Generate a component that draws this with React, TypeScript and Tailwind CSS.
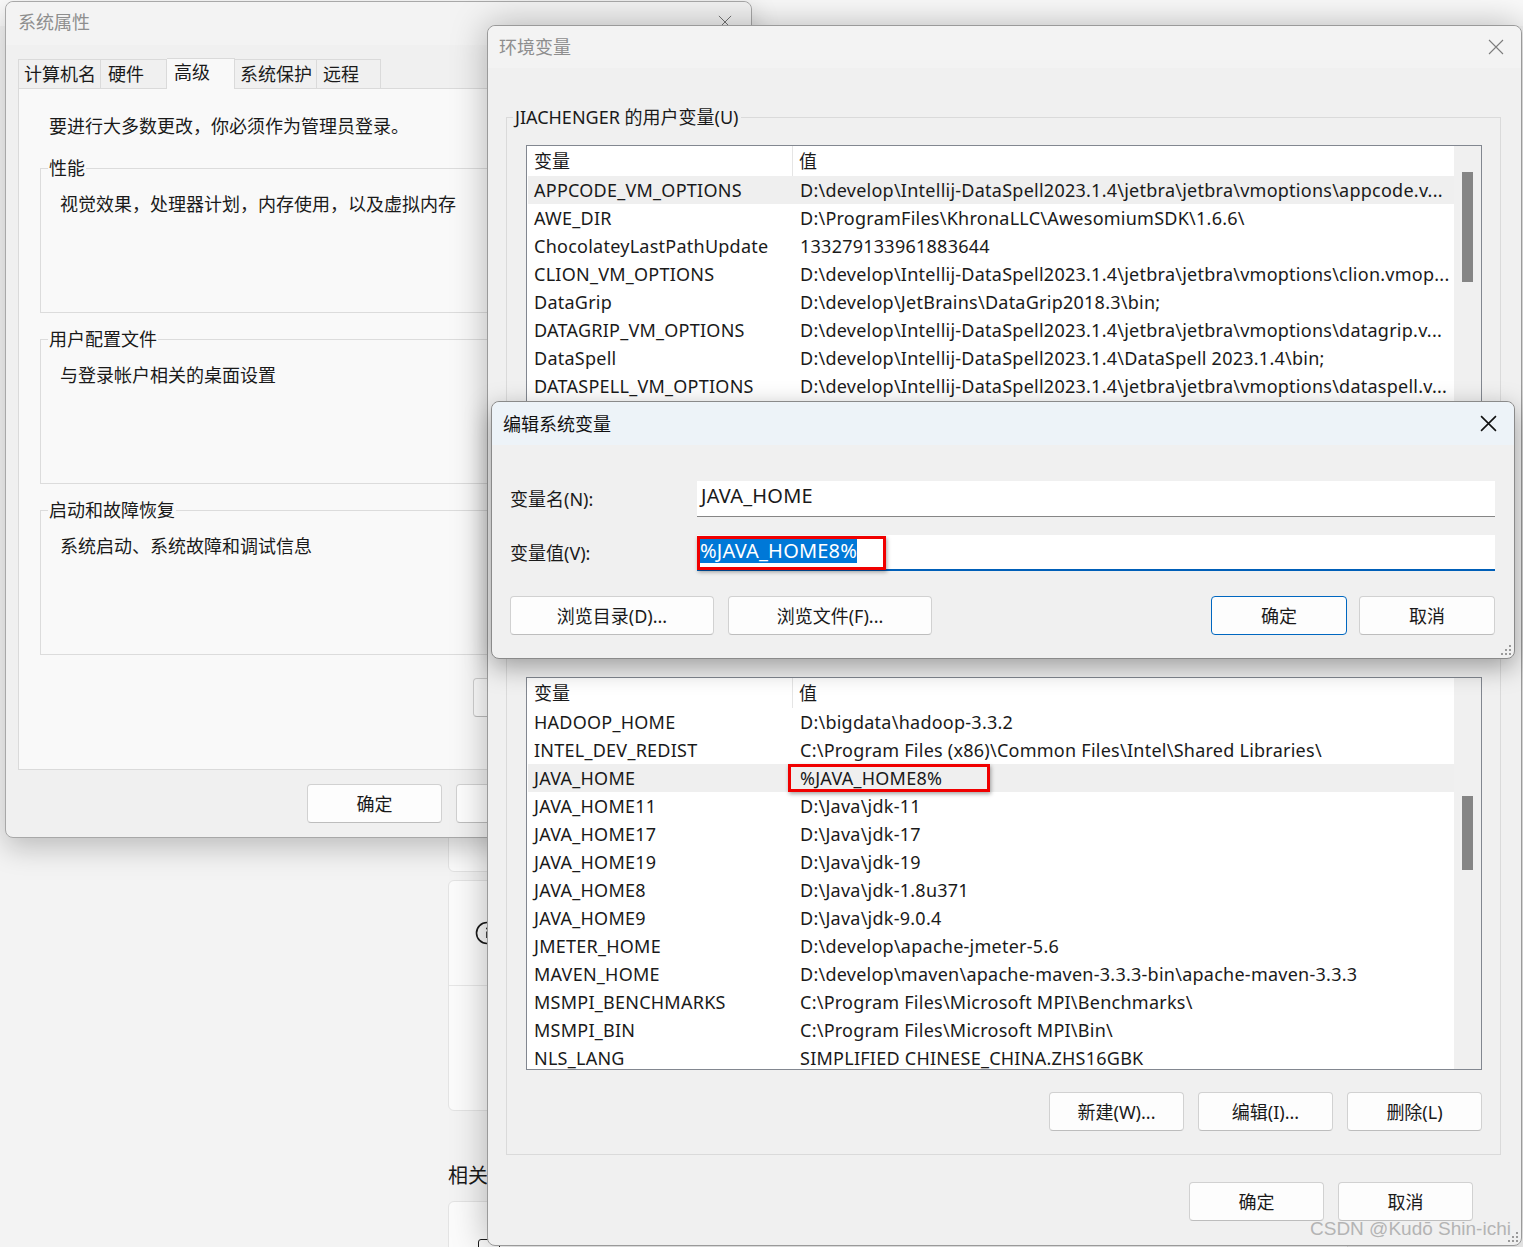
import React from "react";

const userVars: [string, string][] = [
  ["APPCODE_VM_OPTIONS", "D:\\develop\\Intellij-DataSpell2023.1.4\\jetbra\\jetbra\\vmoptions\\appcode.v..."],
  ["AWE_DIR", "D:\\ProgramFiles\\KhronaLLC\\AwesomiumSDK\\1.6.6\\"],
  ["ChocolateyLastPathUpdate", "133279133961883644"],
  ["CLION_VM_OPTIONS", "D:\\develop\\Intellij-DataSpell2023.1.4\\jetbra\\jetbra\\vmoptions\\clion.vmop..."],
  ["DataGrip", "D:\\develop\\JetBrains\\DataGrip2018.3\\bin;"],
  ["DATAGRIP_VM_OPTIONS", "D:\\develop\\Intellij-DataSpell2023.1.4\\jetbra\\jetbra\\vmoptions\\datagrip.v..."],
  ["DataSpell", "D:\\develop\\Intellij-DataSpell2023.1.4\\DataSpell 2023.1.4\\bin;"],
  ["DATASPELL_VM_OPTIONS", "D:\\develop\\Intellij-DataSpell2023.1.4\\jetbra\\jetbra\\vmoptions\\dataspell.v..."],
  ["GATEWAY_VM_OPTIONS", "D:\\develop\\Intellij-DataSpell2023.1.4\\jetbra\\jetbra\\vmoptions\\gateway.v..."],
  ["GOLAND_VM_OPTIONS", "D:\\develop\\Intellij-DataSpell2023.1.4\\jetbra\\jetbra\\vmoptions\\goland.v..."],
  ["IDEA_VM_OPTIONS", "D:\\develop\\Intellij-DataSpell2023.1.4\\jetbra\\jetbra\\vmoptions\\idea.vmo..."],
  ["JETBRAINSCLIENT_VM_OPTIONS", "D:\\develop\\Intellij-DataSpell2023.1.4\\jetbra\\jetbra\\vmoptions\\jetbr..."],
  ["OneDrive", "C:\\Users\\JIACHENGER\\OneDrive"],
  ["Path", "C:\\Users\\JIACHENGER\\AppData\\Local\\Microsoft\\WindowsApps;"],
];

const sysVars: [string, string][] = [
  ["HADOOP_HOME", "D:\\bigdata\\hadoop-3.3.2"],
  ["INTEL_DEV_REDIST", "C:\\Program Files (x86)\\Common Files\\Intel\\Shared Libraries\\"],
  ["JAVA_HOME", "%JAVA_HOME8%"],
  ["JAVA_HOME11", "D:\\Java\\jdk-11"],
  ["JAVA_HOME17", "D:\\Java\\jdk-17"],
  ["JAVA_HOME19", "D:\\Java\\jdk-19"],
  ["JAVA_HOME8", "D:\\Java\\jdk-1.8u371"],
  ["JAVA_HOME9", "D:\\Java\\jdk-9.0.4"],
  ["JMETER_HOME", "D:\\develop\\apache-jmeter-5.6"],
  ["MAVEN_HOME", "D:\\develop\\maven\\apache-maven-3.3.3-bin\\apache-maven-3.3.3"],
  ["MSMPI_BENCHMARKS", "C:\\Program Files\\Microsoft MPI\\Benchmarks\\"],
  ["MSMPI_BIN", "C:\\Program Files\\Microsoft MPI\\Bin\\"],
  ["NLS_LANG", "SIMPLIFIED CHINESE_CHINA.ZHS16GBK"],
  ["NUMBER_OF_PROCESSORS", "16"],
];

function CloseX({ size, color, stroke }: { size: number; color: string; stroke: number }) {
  return (
    <svg width={size} height={size} viewBox="0 0 16 16">
      <path d="M1 1L15 15M15 1L1 15" stroke={color} strokeWidth={stroke} fill="none" />
    </svg>
  );
}

function Grip() {
  // resize grip dots
  const dots = [
    [9, 1], [9, 5], [5, 5], [9, 9], [5, 9], [1, 9],
  ];
  return (
    <svg width="12" height="12" viewBox="0 0 12 12">
      {dots.map(([x, y]) => (
        <rect key={`${x}-${y}`} x={x} y={y} width="2" height="2" fill="#9a9a9a" />
      ))}
    </svg>
  );
}

function WinButton({ label, primary, width }: { label: string; primary?: boolean; width: string }) {
  return (
    <div
      className={`flex h-[39px] shrink-0 items-center justify-center rounded-[4px] border bg-[#fdfdfd] text-[18px] ${width} ${
        primary ? "border-[#0067c0]" : "border-[#d1d1d1] border-b-[#bdbdbd]"
      }`}
    >
      {label}
    </div>
  );
}

function VarList({
  rows,
  selected,
  thumbTop,
  thumbHeight,
  mark,
}: {
  rows: [string, string][];
  selected: number;
  thumbTop: string;
  thumbHeight: string;
  mark?: boolean;
}) {
  return (
    <div className="flex h-[393px] overflow-hidden border border-[#828790] bg-white">
      <div className="min-w-0 flex-1 overflow-hidden">
        <div className="flex h-[30px] items-center">
          <div className="flex h-full w-[266px] items-center border-r border-[#e5e5e5] pl-[7px]">变量</div>
          <div className="pl-[6px]">值</div>
        </div>
        {rows.map(([k, v], i) => (
          <div
            key={k}
            className={`relative ml-px flex h-[28px] items-center whitespace-nowrap tracking-[0.25px] ${
              i === selected ? "bg-[#efefef]" : ""
            }`}
          >
            <div className="w-[265px] shrink-0 pl-[6px]">{k}</div>
            <div className="pl-[7px]">{v}</div>
            {mark && i === selected && (
              <div className="absolute left-[260px] top-0 h-[28px] w-[202px] border-[3px] border-[#f00000] shadow-[1px_2px_4px_rgba(0,0,0,0.35)]" />
            )}
          </div>
        ))}
      </div>
      <div className="w-[27px] shrink-0 bg-[#f0f0f0] pl-[8px]">
        <div className={`w-[11px] bg-[#858585] ${thumbTop} ${thumbHeight}`} />
      </div>
    </div>
  );
}

function VarGroup({
  title,
  rows,
  selected,
  thumbTop,
  thumbHeight,
  mark,
  className,
}: {
  title: string;
  rows: [string, string][];
  selected: number;
  thumbTop: string;
  thumbHeight: string;
  mark?: boolean;
  className?: string;
}) {
  return (
    <fieldset className={`border border-[#dadada] ${className ?? ""}`}>
      <legend className="ml-[6px] px-[2px] leading-[22px]">{title}</legend>
      <div className="pb-[23px] pl-[19px] pr-[18px]">
        <div className="mt-[17px]">
          <VarList rows={rows} selected={selected} thumbTop={thumbTop} thumbHeight={thumbHeight} mark={mark} />
        </div>
        <div className="mt-[22px] flex justify-end gap-[14px]">
          <WinButton label="新建(W)..." width="w-[135px]" />
          <WinButton label="编辑(I)..." width="w-[135px]" />
          <WinButton label="删除(L)" width="w-[135px]" />
        </div>
      </div>
    </fieldset>
  );
}

function Group({ title, text }: { title: string; text: string }) {
  return (
    <fieldset className="w-[690px] border border-[#dcdcdc]">
      <legend className="ml-[7px] px-[1px] leading-[22px]">{title}</legend>
      <div className="h-[133px] pl-[19px] pt-[13px] leading-[24px]">{text}</div>
    </fieldset>
  );
}

function SettingsBackdrop() {
  return (
    <div className="absolute inset-0 flex flex-col bg-[#f3f3f3]">
      <div className="h-[26px] shrink-0 bg-[#fafafa]" />
      <div className="flex flex-col pl-[448px] pt-[734px]">
        <div className="h-[112px] w-[900px] shrink-0 rounded-[6px] border border-[#e3e3e3] bg-[#fbfbfb]" />
        <div className="mt-[8px] w-[900px] shrink-0 rounded-[6px] border border-[#e3e3e3] bg-[#fbfbfb]">
          <div className="flex h-[105px] items-center border-b border-[#e6e6e6] pl-[26px]">
            <svg width="24" height="24" viewBox="0 0 24 24">
              <circle cx="12" cy="12" r="10.5" stroke="#1a1a1a" strokeWidth="1.6" fill="none" />
              <path d="M12 10.5V17" stroke="#1a1a1a" strokeWidth="1.6" />
              <circle cx="12" cy="7.5" r="1" fill="#1a1a1a" />
            </svg>
          </div>
          <div className="h-[124px]" />
        </div>
        <div className="mt-[52px] shrink-0 text-[20px] leading-[26px]">相关设置</div>
        <div className="mt-[12px] h-[100px] w-[900px] shrink-0 rounded-[6px] border border-[#e3e3e3] bg-[#fbfbfb] pl-[29px] pt-[37px]">
          <div className="h-[18px] w-[22px] rounded-[3px] border-[1.5px] border-[#1a1a1a]" />
        </div>
      </div>
    </div>
  );
}

function SystemProperties() {
  return (
    <div className="absolute left-[5px] top-[1px] flex h-[837px] w-[747px] flex-col rounded-lg border border-[#a8a8a8] bg-[#f0f0f0] shadow-[0_10px_28px_rgba(0,0,0,0.22)]">
      <div className="flex h-[43px] shrink-0 items-center justify-between rounded-t-lg bg-[#f3f3f3] pb-[4px] pl-[12px] pr-[19px]">
        <span className="text-[18px] text-[#8e8e8e]">系统属性</span>
        <CloseX size={14} color="#6e6e6e" stroke={1.1} />
      </div>
      <div className="pl-[12px] pr-[11px] pt-[13px]">
        <div className="flex h-[30px] items-end">
          <div className="flex h-[29px] w-[83px] items-center border border-b-0 border-[#dadada] pl-[5px]">计算机名</div>
          <div className="flex h-[29px] w-[66px] items-center border border-b-0 border-l-0 border-[#dadada] pl-[7px]">硬件</div>
          <div className="relative z-10 -mb-px flex h-[31px] w-[68px] items-start border border-b-0 border-l-0 border-[#dadada] bg-[#f9f9f9] pl-[7px] pt-[1px]">
            高级
          </div>
          <div className="flex h-[29px] w-[82px] items-center border border-b-0 border-l-0 border-[#dadada] pl-[5px]">系统保护</div>
          <div className="flex h-[29px] w-[64px] items-center border border-b-0 border-l-0 border-[#dadada] pl-[6px]">远程</div>
        </div>
        <div className="flex h-[682px] flex-col border border-[#dadada] bg-[#f9f9f9]">
          <div className="pl-[30px] pt-[25px] leading-[24px]">要进行大多数更改，你必须作为管理员登录。</div>
          <div className="ml-[21px] mt-[19px] flex flex-col gap-[15px]">
            <Group title="性能" text="视觉效果，处理器计划，内存使用，以及虚拟内存" />
            <Group title="用户配置文件" text="与登录帐户相关的桌面设置" />
            <Group title="启动和故障恢复" text="系统启动、系统故障和调试信息" />
          </div>
          <div className="ml-[454px] mt-[23px]">
            <WinButton label="环境变量(N)..." width="w-[230px]" />
          </div>
        </div>
        <div className="mt-[14px] flex justify-end gap-[14px]">
          <WinButton label="确定" width="w-[135px]" />
          <WinButton label="取消" width="w-[135px]" />
          <WinButton label="应用(A)" width="w-[135px]" />
        </div>
      </div>
    </div>
  );
}

function EnvWindow() {
  return (
    <div className="absolute left-[487px] top-[25px] flex h-[1221px] w-[1035px] flex-col rounded-lg border border-[#9a9a9a] bg-[#f0f0f0] shadow-[0_0_36px_rgba(0,0,0,0.28)]">
      <div className="flex h-[42px] shrink-0 items-center justify-between rounded-t-lg bg-[#f3f3f3] pl-[11px] pr-[17px]">
        <span className="text-[18px] text-[#8e8e8e]">环境变量</span>
        <CloseX size={16} color="#7c7c7c" stroke={1.1} />
      </div>
      <div className="flex flex-col pl-[18px] pr-[20px] pt-[38px]">
        <VarGroup title="JIACHENGER 的用户变量(U)" rows={userVars} selected={0} thumbTop="mt-[26px]" thumbHeight="h-[110px]" />
        <VarGroup
          title="系统变量(S)"
          rows={sysVars}
          selected={2}
          thumbTop="mt-[118px]"
          thumbHeight="h-[74px]"
          mark
          className="mt-[15px]"
        />
        <div className="mt-[27px] flex justify-end gap-[14px] pr-[28px]">
          <WinButton label="确定" width="w-[135px]" />
          <WinButton label="取消" width="w-[135px]" />
        </div>
      </div>
      <div className="absolute bottom-[2px] right-[2px]">
        <Grip />
      </div>
    </div>
  );
}

function EditDialog() {
  return (
    <div className="absolute left-[491px] top-[401px] flex h-[258px] w-[1024px] flex-col rounded-lg border border-[#8a8a8a] bg-[#f0f0f0] shadow-[0_8px_26px_rgba(0,0,0,0.35)]">
      <div className="flex h-[43px] shrink-0 items-center justify-between rounded-t-lg bg-[#edf3f8] pl-[11px] pr-[17px]">
        <span className="text-[18px] text-[#111]">编辑系统变量</span>
        <CloseX size={17} color="#111" stroke={1.5} />
      </div>
      <div className="flex flex-col pl-[18px] pr-[19px] pt-[36px]">
        <div className="flex h-[36px] items-center">
          <div className="w-[187px] shrink-0">变量名(N):</div>
          <div className="flex h-[36px] flex-1 items-center border-b border-[#868686] bg-white pb-[5px] pl-[4px] text-[20px] tracking-[0.2px]">
            JAVA_HOME
          </div>
        </div>
        <div className="mt-[18px] flex h-[36px] items-center">
          <div className="w-[187px] shrink-0">变量值(V):</div>
          <div className="relative flex h-[36px] flex-1 items-center border-b-2 border-[#005fb8] bg-white pb-[3px] pl-[3px] text-[20px] tracking-[0.2px]">
            <span className="bg-[#0078d7] leading-[24px] text-white">%JAVA_HOME8%</span>
            <div className="absolute left-0 top-[1px] h-[34px] w-[189px] border-[3px] border-[#f00000] shadow-[1px_2px_4px_rgba(0,0,0,0.35)]" />
          </div>
        </div>
        <div className="mt-[25px] flex items-center">
          <WinButton label="浏览目录(D)..." width="w-[204px]" />
          <div className="ml-[14px]">
            <WinButton label="浏览文件(F)..." width="w-[204px]" />
          </div>
          <div className="flex-1" />
          <WinButton label="确定" primary width="w-[136px]" />
          <div className="ml-[12px]">
            <WinButton label="取消" width="w-[136px]" />
          </div>
        </div>
      </div>
      <div className="absolute bottom-[2px] right-[2px]">
        <Grip />
      </div>
    </div>
  );
}

export default function App() {
  return (
    <div className="relative h-[1247px] w-[1523px] overflow-hidden font-[family-name:Noto_Sans,Noto_Sans_CJK_SC,sans-serif] text-[18px] leading-[24px] text-[#1a1a1a]">
      <SettingsBackdrop />
      <SystemProperties />
      <EnvWindow />
      <EditDialog />
      <div className="absolute left-[1310px] top-[1217px] font-[family-name:Liberation_Sans,sans-serif] text-[19px] text-[#b4b4b4]">
        CSDN @Kudō Shin-ichi
      </div>
    </div>
  );
}
